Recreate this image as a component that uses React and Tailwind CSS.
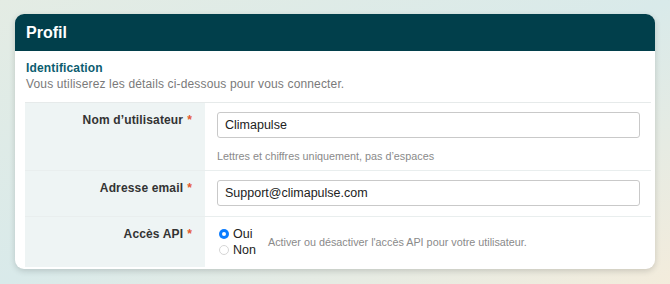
import React from 'react';

const font = { fontFamily: '"Liberation Sans", Arial, sans-serif' };

function Label({ children }) {
  return (
    <div className="w-[180px] shrink-0 bg-[#eef4f4] pr-[13px] pt-[8px] text-right text-[12px] leading-[18px] tracking-[0.15px] font-bold text-[#333]">
      {children}
      <span className="ml-[4px] text-[#e5582f]">*</span>
    </div>
  );
}

function Radio({ checked, label }) {
  return (
    <label className="flex items-center gap-[4px] text-[12.5px] leading-[16px] text-[#222]">
      {checked ? (
        <span className="flex h-[10px] w-[10px] items-center justify-center rounded-full bg-[#0a7cff]">
          <span className="h-[4px] w-[4px] rounded-full bg-white" />
        </span>
      ) : (
        <span className="h-[10px] w-[10px] rounded-full border border-[#d5d5d5] bg-white" />
      )}
      {label}
    </label>
  );
}

export default function App() {
  return (
    <div
      style={font}
      className="h-[284px] w-[670px] bg-gradient-to-br from-[#e4ece4] via-[#d9eaea] to-[#f3ecdc] pt-[14px] px-[15px]"
    >
      <div className="overflow-hidden rounded-[9px] bg-white pb-[2px] shadow-[0_2px_6px_rgba(0,0,0,0.16)]">
        <div className="flex h-[37px] items-center bg-[#013f4b] px-[11px] text-[16px] font-bold text-white">
          Profil
        </div>
        <div className="pl-[10px] pr-[4px]">
          <div className="pt-[9px] pb-[10px] pl-[1px]">
            <div className="text-[12px] font-bold leading-[16px] tracking-[0.15px] text-[#0c5d70]">Identification</div>
            <div className="text-[12px] leading-[16px] tracking-[0.15px] text-[#7a7a7a]">
              Vous utiliserez les détails ci-dessous pour vous connecter.
            </div>
          </div>
          <div className="border-t border-[#e6eaea]">
            <div className="flex h-[68px] border-b border-[#e9eeee]">
              <Label>Nom d’utilisateur</Label>
              <div className="flex-1 pl-[12px] pr-[11px] pt-[9px]">
                <div className="flex h-[26px] items-center rounded-[3px] border border-[#c9c9c9] px-[7px] text-[12.5px] text-[#222]">
                  Climapulse
                </div>
                <div className="mt-[10px] text-[10.8px] text-[#8a8a8a]">
                  Lettres et chiffres uniquement, pas d’espaces
                </div>
              </div>
            </div>
            <div className="flex h-[46px] border-b border-[#e9eeee]">
              <Label>Adresse email</Label>
              <div className="flex-1 pl-[12px] pr-[11px] pt-[9px]">
                <div className="flex h-[26px] items-center rounded-[3px] border border-[#c9c9c9] px-[7px] text-[12.5px] text-[#222]">
                  Support@climapulse.com
                </div>
              </div>
            </div>
            <div className="flex h-[50px]">
              <Label>Accès API</Label>
              <div className="flex flex-1 items-center gap-[12px] pl-[14px] pt-[4px] pb-[4px]">
                <div className="flex flex-col">
                  <Radio checked label="Oui" />
                  <Radio label="Non" />
                </div>
                <div className="text-[10.8px] text-[#8a8a8a]">
                  Activer ou désactiver l'accès API pour votre utilisateur.
                </div>
              </div>
            </div>
          </div>
        </div>
      </div>
    </div>
  );
}
